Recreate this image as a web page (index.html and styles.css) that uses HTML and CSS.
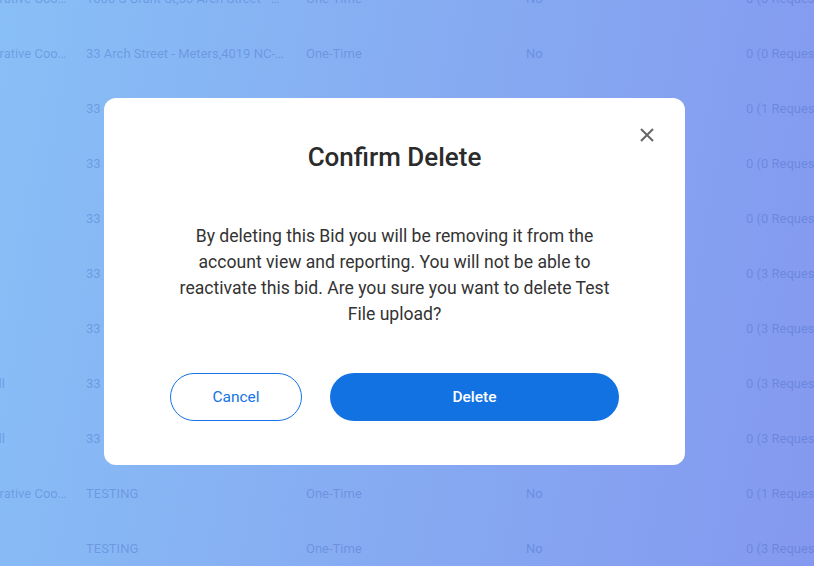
FILE: index.html
```html
<!DOCTYPE html>
<html lang="en">
<head>
  <meta charset="UTF-8" />
  <meta name="viewport" content="width=device-width, initial-scale=1.0"/>
  <title>Bids</title>
  <link rel="stylesheet" href="styles.css">
</head>
<body>

  <!-- Bids table (behind the modal) -->
  <div class="bids">
    <div class="row"><span>Cooperative Cooperative</span><span>1000 S Grant St,33 Arch Street - Meters</span><span>One-Time</span><span>No</span><span>0 (0 Requests)</span></div>
    <div class="row"><span>Cooperative Cooperative</span><span>33 Arch Street - Meters,4019 NC-54 Building</span><span>One-Time</span><span>No</span><span>0 (0 Requests)</span></div>
    <div class="row"><span></span><span>33 Arch Street</span><span>One-Time</span><span>No</span><span>0 (1 Requests)</span></div>
    <div class="row"><span></span><span>33 Arch Street</span><span>One-Time</span><span>No</span><span>0 (0 Requests)</span></div>
    <div class="row"><span></span><span>33 Arch Street</span><span>One-Time</span><span>No</span><span>0 (0 Requests)</span></div>
    <div class="row"><span></span><span>33 Arch Street</span><span>One-Time</span><span>No</span><span>0 (3 Requests)</span></div>
    <div class="row"><span></span><span>33 Arch Street</span><span>One-Time</span><span>No</span><span>0 (3 Requests)</span></div>
    <div class="row"><span>Kendall</span><span>33 Arch Street</span><span>One-Time</span><span>No</span><span>0 (3 Requests)</span></div>
    <div class="row"><span>Kendall</span><span>33 Arch Street</span><span>One-Time</span><span>No</span><span>0 (3 Requests)</span></div>
    <div class="row"><span>Cooperative Cooperative</span><span>TESTING</span><span>One-Time</span><span>No</span><span>0 (1 Requests)</span></div>
    <div class="row"><span></span><span>TESTING</span><span>One-Time</span><span>No</span><span>0 (3 Requests)</span></div>
  </div>

  <!-- Confirm Delete modal -->
  <div class="overlay">
    <div class="modal">
      <button class="close-btn" aria-label="Close">
        <svg width="14" height="14" viewBox="0 0 14 14"><path d="M1 1L13 13M13 1L1 13" stroke="#666" stroke-width="2" fill="none"/></svg>
      </button>
      <h2 class="modal-title">Confirm Delete</h2>
      <p class="modal-text">By deleting this Bid you will be removing it from the account view and reporting. You will not be able to reactivate this bid. Are you sure you want to delete Test File upload?</p>
      <div class="modal-actions">
        <button class="btn btn-outline">Cancel</button>
        <button class="btn btn-primary">Delete</button>
      </div>
    </div>
  </div>

</body>
</html>
```

FILE: styles.css
```css
html, body {
  margin: 0;
  padding: 0;
  height: 100%;
  overflow: hidden;
  font-family: Roboto, 'Liberation Sans', sans-serif;
  background: linear-gradient(100deg, #88bff6 0%, #86abf2 50%, #8499ef 100%);
}

/* Table behind the modal */
.bids {
  margin-top: -29px;
  margin-left: -38px;
}

.row {
  display: grid;
  grid-template-columns: 124px 220px 220px 220px 220px;
  height: 55px;
  align-items: center;
  font-size: 13px;
  color: rgba(60, 95, 190, 0.35);
}

.row span {
  white-space: nowrap;
  overflow: hidden;
  text-overflow: ellipsis;
  padding-right: 16px;
}

.row span:nth-child(2) {
  padding-right: 20px;
}

/* Modal */
.overlay {
  position: fixed;
  top: 0; left: 0;
  width: 100vw;
  height: 100vh;
  display: flex;
  align-items: center;
  justify-content: center;
  padding: 0 25px 4px 0;
  box-sizing: border-box;
}

.modal {
  position: relative;
  width: 581px;
  box-sizing: border-box;
  padding: 43px 66px 44px;
  background: #fff;
  border-radius: 12px;
  text-align: center;
}

.close-btn {
  position: absolute;
  top: 30px;
  right: 31px;
  width: 14px;
  height: 14px;
  padding: 0;
  border: none;
  background: none;
  cursor: pointer;
  display: flex;
}

.modal-title {
  margin: 0;
  font-size: 26px;
  line-height: 32px;
  font-weight: 500;
  color: #2b2b2b;
}

.modal-text {
  margin: 50px 0 0;
  font-size: 17.6px;
  line-height: 26px;
  color: #333;
}

.modal-actions {
  display: flex;
  justify-content: center;
  gap: 28px;
  margin-top: 46px;
}

.btn {
  height: 48px;
  border-radius: 24px;
  font-family: Roboto, 'Liberation Sans', sans-serif;
  font-size: 15.5px;
  cursor: pointer;
  box-sizing: border-box;
}

.btn-outline {
  width: 132px;
  background: #fff;
  border: 1px solid #1473e6;
  color: #1473e6;
}

.btn-primary {
  width: 289px;
  background: #1372e2;
  border: none;
  color: #fff;
  font-weight: 500;
}
```
